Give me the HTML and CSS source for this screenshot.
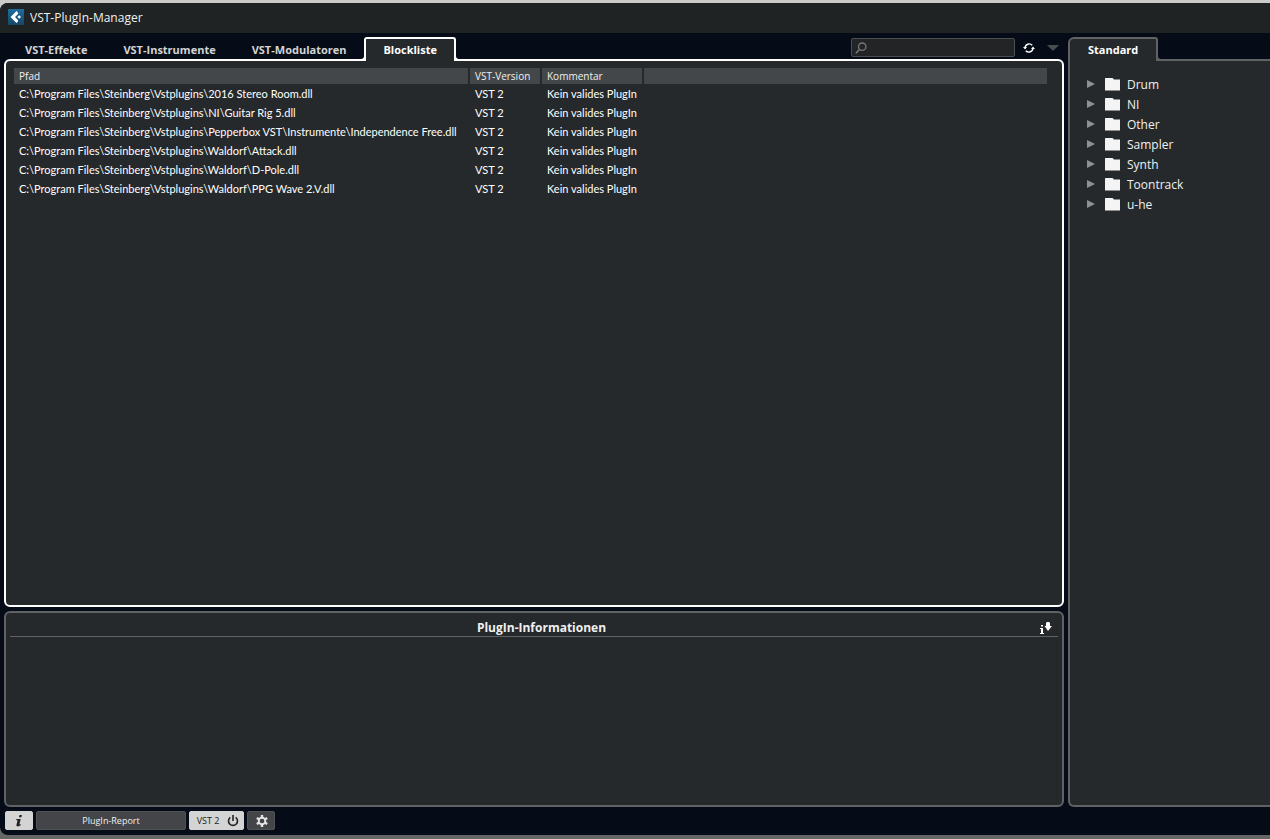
FILE: index.html
```html
<!DOCTYPE html>
<html lang="de">
<head>
<meta charset="utf-8">
<title>VST-PlugIn-Manager</title>
<link rel="stylesheet" href="styles.css">
</head>
<body>
<div class="window">
  <header class="titlebar">
    <svg class="logo" viewBox="0 0 16 16" aria-hidden="true"><defs><linearGradient id="lg" x2="0" y2="1"><stop offset="0" stop-color="#1d6d9e"/><stop offset="1" stop-color="#174766"/></linearGradient></defs><path fill="url(#lg)" d="M0 0h16v16H0z"/><path fill="#fff" d="M8.500 2 2.500 8l6 6 1.500-1.500V11L7 8l3-3V3.500z"/><path fill="#fff" d="m11.200 6.200 1.800 1.800-1.800 1.800L9.400 8z"/></svg>
    <h1>VST-PlugIn-Manager</h1>
  </header>
  <div class="workspace">
    <main class="left">
      <section class="browser">
        <div class="tabrow">
          <nav class="tabs" role="tablist">
            <button class="tab" role="tab">VST-Effekte</button>
            <button class="tab" role="tab">VST-Instrumente</button>
            <button class="tab" role="tab">VST-Modulatoren</button>
            <button class="tab active" role="tab" aria-selected="true">Blockliste</button>
          </nav>
          <div class="tools">
            <label class="search">
              <svg viewBox="0 0 12 12" aria-hidden="true"><circle cx="7.200" cy="4.700" r="3.700" fill="none" stroke="#77797b" stroke-width="1.300"/><path d="M4.500 7.500.800 11.200" stroke="#77797b" stroke-width="1.600"/></svg>
              <input type="text" aria-label="Suchen">
            </label>
            <button class="icon" aria-label="Aktualisieren"><svg width="12" height="12" viewBox="0 0 12 12"><g fill="none" stroke="#fff" stroke-width="1.400"><path d="M2 6a4.200 4.200 0 0 1 7.200-2.800M10 6a4.200 4.200 0 0 1-7.200 2.800"/></g><path fill="#fff" d="M0 5h4L2 7.400zM12 7H8l2-2.400z"/></svg></button>
            <button class="icon" aria-label="Optionen"><svg width="12" height="6" viewBox="0 0 12 6"><path fill="#4a4d4f" d="M0 0h12L6 6z"/></svg></button>
          </div>
        </div>
        <div class="panel list">
          <table>
            <colgroup><col class="c-path"><col class="c-version"><col class="c-comment"><col></colgroup>
            <thead><tr><th>Pfad</th><th>VST-Version</th><th>Kommentar</th><th></th></tr></thead>
            <tbody>
              <tr><td>C:\Program Files\Steinberg\Vstplugins\2016 Stereo Room.dll</td><td>VST 2</td><td>Kein valides PlugIn</td><td></td></tr>
              <tr><td>C:\Program Files\Steinberg\Vstplugins\NI\Guitar Rig 5.dll</td><td>VST 2</td><td>Kein valides PlugIn</td><td></td></tr>
              <tr><td>C:\Program Files\Steinberg\Vstplugins\Pepperbox VST\Instrumente\Independence Free.dll</td><td>VST 2</td><td>Kein valides PlugIn</td><td></td></tr>
              <tr><td>C:\Program Files\Steinberg\Vstplugins\Waldorf\Attack.dll</td><td>VST 2</td><td>Kein valides PlugIn</td><td></td></tr>
              <tr><td>C:\Program Files\Steinberg\Vstplugins\Waldorf\D-Pole.dll</td><td>VST 2</td><td>Kein valides PlugIn</td><td></td></tr>
              <tr><td>C:\Program Files\Steinberg\Vstplugins\Waldorf\PPG Wave 2.V.dll</td><td>VST 2</td><td>Kein valides PlugIn</td><td></td></tr>
            </tbody>
          </table>
        </div>
      </section>
      <section class="panel info">
        <div class="info-head">
          <h2>PlugIn-Informationen</h2>
          <button class="icon" aria-label="Informationen ausblenden"><svg width="12" height="12" viewBox="0 0 12 12"><path fill="#fff" d="M1 3h2v1.500H1zM0 6h3v5h1v1H0v-1h1V7H0zM6 1l1-1h2l1 1v3h2L8 9 4.500 4H6z"/></svg></button>
        </div>
      </section>
    </main>
    <aside class="right">
      <div class="tabs" role="tablist"><button class="tab active" role="tab" aria-selected="true">Standard</button></div>
      <div class="panel collection">
        <ul class="tree">
          <li><button class="node"><i class="arrow"></i><i class="folder"></i>Drum</button></li>
          <li><button class="node"><i class="arrow"></i><i class="folder"></i>NI</button></li>
          <li><button class="node"><i class="arrow"></i><i class="folder"></i>Other</button></li>
          <li><button class="node"><i class="arrow"></i><i class="folder"></i>Sampler</button></li>
          <li><button class="node"><i class="arrow"></i><i class="folder"></i>Synth</button></li>
          <li><button class="node"><i class="arrow"></i><i class="folder"></i>Toontrack</button></li>
          <li><button class="node"><i class="arrow"></i><i class="folder"></i>u-he</button></li>
        </ul>
      </div>
    </aside>
  </div>
  <footer class="bar">
    <button class="btn light info-btn" aria-label="Info"><svg width="8" height="12" viewBox="0 0 8 12"><path fill="#222" d="M4.500 0h2.400L6.400 2.200H4zM1.500 4h4.200L4.400 9.600l1.400-.6-.3 1.200C4.500 11.200 3.200 11.500 2 11.300 1.300 11 1.300 10.500 1.500 9.700L2.600 5.200H1.200z"/></svg></button>
    <button class="btn report">PlugIn-Report</button>
    <button class="btn light vst">VST 2<svg width="12" height="12" viewBox="0 0 12 12"><g fill="none" stroke="#222" stroke-width="1.600"><path d="M3.300 2.300a4.500 4.500 0 1 0 5.400 0M6 0v6"/></g></svg></button>
    <button class="btn gear" aria-label="Einstellungen"><svg width="12" height="12" viewBox="0 0 12 12"><circle cx="6" cy="6" r="3.300" fill="none" stroke="#e4e4e4" stroke-width="1.900"/><g stroke="#e4e4e4" stroke-width="2.400"><path d="M6 0v2.500M6 9.500V12M.8 3l2.200 1.250M9 7.750 11.200 9M.8 9 3 7.750M9 4.250 11.200 3"/></g></svg></button>
  </footer>
</div>
</body>
</html>
```
FILE: styles.css
```css
* { box-sizing: border-box; }
body {
  margin: 0;
  min-height: 100vh;
  padding: 3px 0 4px;
  display: flex;
  background: linear-gradient(#cbcbc9 50%, #656764 50%);
  color: #f0f0f0;
  font: 11px/16px "Open Sans", "Noto Sans", sans-serif;
}
button { font: inherit; color: inherit; background: none; border: 0; padding: 0; margin: 0; }
svg { display: block; }
h1, h2 { margin: 0; }
.window {
  flex: 1;
  min-width: 0;
  display: flex;
  flex-direction: column;
  background: #050c18;
  border-radius: 8px 0 0 8px;
  overflow: hidden;
}
.titlebar {
  display: flex;
  align-items: center;
  gap: 6px;
  height: 30px;
  padding: 0 8px;
  background: #1f2324;
}
.logo { width: 16px; height: 16px; margin-bottom: 2px; }
.titlebar h1 { font-size: 12px; font-weight: 400; }
.workspace {
  flex: 1;
  display: grid;
  grid-template-columns: minmax(0, 1fr) 202px;
  gap: 4px;
  padding: 4px 0 0 4px;
}
.left { display: flex; flex-direction: column; gap: 4px; }
.browser, .right { display: flex; flex-direction: column; --line: #606264; }
.browser { flex: 1; --line: #fff; }
.panel {
  background: #25292b;
  border: 2px solid var(--line, #606264);
  border-radius: 6px;
}
.tabrow { display: flex; justify-content: space-between; }
.tabs { display: flex; height: 24px; margin-bottom: -2px; position: relative; z-index: 1; }
.browser .tabs { padding-left: 3px; }
.tab { height: 22px; padding: 4px 18px 0; font-weight: 700; color: #d4d4d4; white-space: nowrap; }
.tab.active {
  position: relative;
  height: 24px;
  padding: 0 17px;
  color: #fff;
  background: #25292b;
  border: 2px solid var(--line);
  border-bottom: 0;
  border-radius: 3px 3px 0 0;
}
.tab.active::before, .tab.active::after {
  content: "";
  position: absolute;
  bottom: 0;
  width: 5px;
  height: 5px;
  border-bottom: 2px solid var(--line);
}
.tab.active::before { right: 100%; border-right: 2px solid var(--line); border-bottom-right-radius: 5px; }
.tab.active::after { left: 100%; border-left: 2px solid var(--line); border-bottom-left-radius: 5px; }
.right .tab.active { padding: 0 18px; border-top-left-radius: 6px; }
.right .tab.active::before { display: none; }
.tools { display: flex; height: 21px; align-items: center; gap: 8px; padding-right: 5px; }
.search {
  display: flex;
  align-items: center;
  width: 164px;
  height: 19px;
  padding: 0 3px;
  background: #222426;
  border: 1px solid #4b4e50;
  border-radius: 2px;
}
.search svg { width: 12px; height: 12px; flex: none; }
.search input { flex: 1; min-width: 0; border: 0; padding: 0 4px; background: none; color: inherit; font: inherit; outline: 0; }
.icon { display: grid; place-items: center; min-width: 12px; height: 16px; }
.tools .icon:last-child { margin-left: 4px; }
.list { flex: 1; padding: 7px 13px 7px 6px; }
table { width: 100%; table-layout: fixed; border-spacing: 2px 0; }
.c-path { width: 454px; }
.c-version { width: 70px; }
.c-comment { width: 100px; }
th, td { padding: 0 5px; text-align: left; font-weight: 400; white-space: nowrap; }
th { height: 16px; font-size: 10px; background: #434749; }
td { height: 19px; font-family: Lato, "Open Sans", sans-serif; color: #fff; }
.info { height: 196px; padding: 4px; }
.info-head {
  display: grid;
  grid-template-columns: 1fr auto 1fr;
  align-items: center;
  height: 20px;
  padding-left: 15px;
  border-bottom: 1px solid #606264;
}
.info-head h2 { grid-column: 2; font-size: 12px; line-height: 20px; padding-top: 1px; }
.info-head .icon { justify-self: end; margin-right: 6px; }
.collection { flex: 1; border-right: 0; border-radius: 0 0 0 6px; padding: 14px 17px; }
.tree { list-style: none; margin: 0; padding: 0; }
.node { display: flex; align-items: center; width: 100%; height: 20px; font-size: 12px; text-align: left; }
.arrow { width: 8px; height: 8px; margin: 0 10px 2px 0; background: #8e9092; clip-path: polygon(0 0, 100% 50%, 0 100%); }
.folder {
  width: 15px;
  height: 13px;
  margin: 0 7px 2px 0;
  background: #f4f4f4;
  clip-path: polygon(0 1px, 1px 0, 7px 0, 9px 2px, 15px 2px, 15px 13px, 0 13px);
}
.bar { display: flex; gap: 3px; padding: 4px 5px 5px; }
.btn {
  display: flex;
  align-items: center;
  justify-content: center;
  height: 19px;
  font-size: 9px;
  background: #434548;
  border: 1px solid #505255;
  border-radius: 2px;
}
.btn.light { background: #d4d4d4; border-color: #d4d4d4; color: #222; }
.info-btn { width: 28px; }
.gear { width: 28px; padding-left: 2px; }
.report { width: 150px; }
.vst { width: 55px; gap: 8px; padding-left: 3px; }
```
